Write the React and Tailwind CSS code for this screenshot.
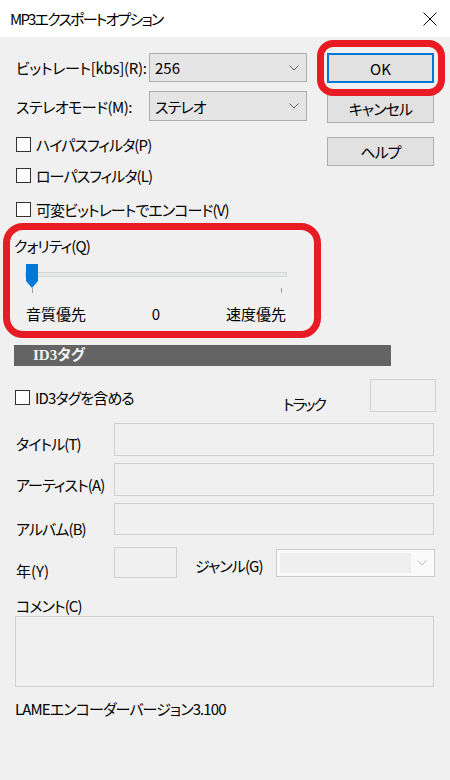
import React from "react";

const Chevron = ({ color = "#606060" }) => (
  <svg width="10" height="6" viewBox="0 0 10 6">
    <polyline points="0.5,0.5 5,5 9.5,0.5" fill="none" stroke={color} strokeWidth="1" />
  </svg>
);

const Check = ({ label }) => (
  <div className="flex items-center h-[20px]">
    <div className="w-[15px] h-[15px] border border-[#333333] bg-white shrink-0" />
    <span className="ml-[5px]">{label}</span>
  </div>
);

const Input = ({ w, h }) => (
  <div className={`border border-[#d0d0d0] bg-[#f0f0f0] ${w} ${h}`} />
);

export default function App() {
  return (
    <div className="w-[450px] h-[780px] bg-[#f0f0f0] relative overflow-hidden text-[15px] leading-none whitespace-nowrap tracking-[-0.9px] text-black font-['Noto_Sans_CJK_JP','Noto_Sans',sans-serif] [font-feature-settings:'palt']">
      {/* Title bar */}
      <div className="h-[37px] bg-white flex items-center justify-between pl-[10px] pr-[13px]">
        <span className="text-[15px] tracking-[-1.8px]">MP3エクスポートオプション</span>
        <svg width="14" height="14" viewBox="0 0 14 14">
          <line x1="0.5" y1="0.5" x2="13.5" y2="13.5" stroke="#000" strokeWidth="1" />
          <line x1="13.5" y1="0.5" x2="0.5" y2="13.5" stroke="#000" strokeWidth="1" />
        </svg>
      </div>

      {/* Top section */}
      <div className="flex">
        <div className="w-[327px] pt-[16px] pl-[16px]">
          <div className="flex items-center h-[29px]">
            <span className="w-[133px] tracking-[-0.3px]">ビットレート[kbs](R):</span>
            <div className="w-[158px] h-[29px] border border-[#adadad] bg-[#e5e5e5] flex items-center justify-between pl-[5px] pr-[7px]">
              <span className="tracking-normal">256</span>
              <Chevron />
            </div>
          </div>
          <div className="flex items-center h-[30px] mt-[9px]">
            <span className="w-[133px] tracking-[-0.5px]">ステレオモード(M):</span>
            <div className="w-[158px] h-[30px] border border-[#adadad] bg-[#e5e5e5] flex items-center justify-between pl-[5px] pr-[7px]">
              <span>ステレオ</span>
              <Chevron />
            </div>
          </div>
          <div className="mt-[13px]">
            <Check label="ハイパスフィルタ(P)" />
          </div>
          <div className="mt-[11px]">
            <Check label="ローパスフィルタ(L)" />
          </div>
          <div className="mt-[14px]">
            <Check label="可変ビットレートでエンコード(V)" />
          </div>
          <div className="mt-[16px] h-[20px] flex items-center -ml-[2px]">クォリティ(Q)</div>
          <div className="mt-[7px] ml-[9px] w-[262px] h-[32px] relative">
            <div className="absolute left-0 right-0 top-[10px] h-[5px] bg-[#e7eaea] border border-[#d6d6d6]" />
            <svg className="absolute left-[1px] top-[2px]" width="12" height="24" viewBox="0 0 12 24">
              <polygon points="0,0 12,0 12,17 6,24 0,17" fill="#0078d7" />
            </svg>
            <div className="absolute left-[7px] top-[26px] w-px h-[5px] bg-[#a0a0a0]" />
            <div className="absolute left-[256px] top-[26px] w-px h-[5px] bg-[#a0a0a0]" />
          </div>
          <div className="mt-[9px] ml-[10px] w-[260px] h-[20px] flex items-center justify-between tracking-normal">
            <span>音質優先</span>
            <span>0</span>
            <span>速度優先</span>
          </div>
        </div>
        <div className="w-[107px] pt-[16px]">
          <div className="h-[30px] border-2 border-[#0078d7] bg-[#e1e1e1] flex items-center justify-center tracking-normal">OK</div>
          <div className="mt-[11px] h-[29px] border border-[#adadad] bg-[#e1e1e1] flex items-center justify-center">キャンセル</div>
          <div className="mt-[14px] h-[29px] border border-[#adadad] bg-[#e1e1e1] flex items-center justify-center">ヘルプ</div>
        </div>
      </div>

      {/* ID3 section */}
      <div className="mt-[22px] ml-[14px] w-[377px] h-[21px] bg-[#646464] flex items-center pl-[19px]">
        <span className="font-bold tracking-normal text-[#f2f2f2] font-['Liberation_Serif','Noto_Sans_CJK_JP',serif]">ID3タグ</span>
      </div>

      <div className="pl-[15px]">
        <div className="mt-[13px] h-[33px] flex items-start">
          <div className="w-[268px] mt-[8px]">
            <Check label="ID3タグを含める" />
          </div>
          <div className="w-[87px] h-[20px] mt-[14px] flex items-center tracking-[-2px]">トラック</div>
          <Input w="w-[66px]" h="h-[33px]" />
        </div>

        <div className="mt-[11px] h-[33px] flex items-start">
          <div className="w-[99px] h-[20px] mt-[10px] pl-[1px] flex items-center">タイトル(T)</div>
          <Input w="w-[320px]" h="h-[33px]" />
        </div>

        <div className="mt-[7px] h-[33px] flex items-start">
          <div className="w-[99px] h-[20px] mt-[11px] pl-[1px] flex items-center">アーティスト(A)</div>
          <Input w="w-[320px]" h="h-[33px]" />
        </div>

        <div className="mt-[7px] h-[32px] flex items-start">
          <div className="w-[99px] h-[20px] mt-[15px] pl-[1px] flex items-center">アルバム(B)</div>
          <Input w="w-[320px]" h="h-[32px]" />
        </div>

        <div className="mt-[12px] h-[31px] flex items-start">
          <div className="w-[99px] h-[20px] mt-[13px] pl-[1px] flex items-center tracking-normal">年(Y)</div>
          <Input w="w-[63px]" h="h-[31px]" />
          <div className="ml-[18px] w-[81px] h-[20px] mt-[8px] flex items-center">ジャンル(G)</div>
          <div className="mt-[2px] w-[159px] h-[28px] border border-[#cccccc] bg-[#fafafa] flex items-center pl-[3px] pr-[7px]">
            <div className="w-[131px] h-[20px] bg-[#efefef]" />
            <div className="ml-auto">
              <Chevron color="#b8b8b8" />
            </div>
          </div>
        </div>

        <div className="mt-[17px] h-[20px] pl-[1px] flex items-center">コメント(C)</div>
        <div className="mt-[1px]">
          <Input w="w-[419px]" h="h-[71px]" />
        </div>

        <div className="mt-[11px] h-[20px] flex items-center">LAMEエンコーダーバージョン3.100</div>
      </div>

      {/* Red annotation overlays */}
      <div className="absolute left-[317px] top-[40px] w-[128px] h-[56px] border-[7px] border-[#e81c24] rounded-[16px]" />
      <div className="absolute left-[3px] top-[223px] w-[318px] h-[115px] border-[7px] border-[#e81c24] rounded-[20px]" />
    </div>
  );
}
